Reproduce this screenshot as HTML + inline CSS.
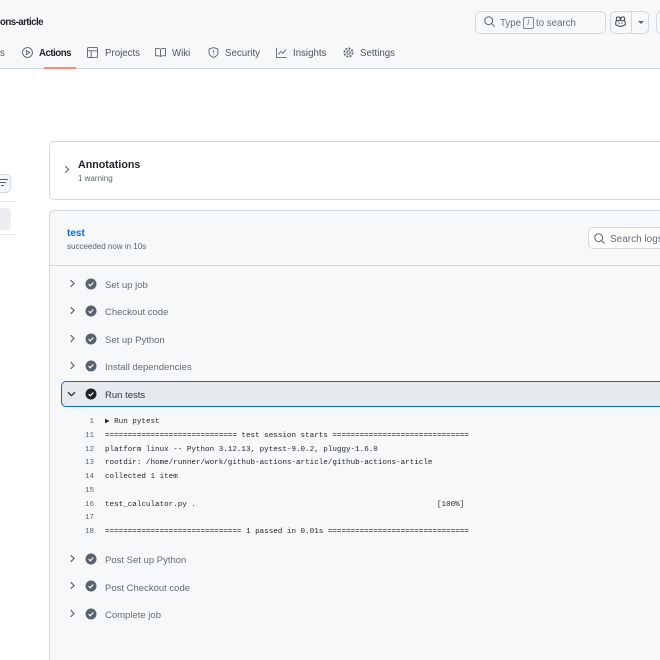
<!DOCTYPE html>
<html><head><meta charset="utf-8">
<style>
html,body{margin:0;padding:0;width:660px;height:660px;overflow:hidden;background:#fff;font-family:"Liberation Sans",sans-serif;color:#59636e}
#w{position:relative;width:660px;height:660px;overflow:hidden}
.a{position:absolute}
.t{position:absolute;white-space:nowrap;line-height:14px}
.tab{font-size:9.700px;color:#4c545d;top:47px}
.step{font-size:9.500px;color:#636c76;left:105px}
.ln{position:absolute;left:70px;width:24px;text-align:right;font:7.580px/12px "Liberation Mono",monospace;color:#59636e}
.lg{position:absolute;left:105px;font:7.580px/12px "Liberation Mono",monospace;color:#1f2328;white-space:pre}
svg{position:absolute;overflow:visible}
</style></head><body><div id="w">
<div class="a" style="left:0;top:0;width:660px;height:68px;background:#f6f8fa;border-bottom:1px solid #d1d9e0"></div>
<div class="t" style="left:0;top:16px;font-size:9.700px;letter-spacing:-.55px;font-weight:bold;color:#1f2328">ons-article</div>
<div class="t tab" style="left:0">s</div>
<svg style="left:22px;top:47px" width="11" height="11" viewBox="0 0 16 16" fill="none" stroke="#59636e" stroke-width="1.300"><circle cx="8" cy="8" r="7.200"/><path d="M6.300 5v6l4.700-3z"/></svg>
<div class="t tab" style="left:39px;font-weight:bold;font-size:9.700px;letter-spacing:-.5px;color:#1f2328">Actions</div>
<div class="a" style="left:44px;top:67px;width:32px;height:2px;background:#fd8c73"></div>
<svg style="left:87px;top:47px" width="11" height="11" viewBox="0 0 16 16" fill="none" stroke="#59636e" stroke-width="1.300"><rect x=".7" y=".7" width="14.600" height="14.600" rx="1.500"/><path d="M.7 5.500h14.600M6 5.500v9.800"/></svg>
<div class="t tab" style="left:105px">Projects</div>
<svg style="left:155px;top:47px" width="11" height="11" viewBox="0 0 16 16" fill="none" stroke="#59636e" stroke-width="1.300"><path d="M8 3.500C6.500 2 3 2 .8 2.300v10.500c2.500-.3 5.500-.3 7.200 1 1.700-1.300 4.700-1.300 7.200-1V2.300C13 2 9.500 2 8 3.500zv10"/></svg>
<div class="t tab" style="left:172px">Wiki</div>
<svg style="left:208px;top:47px" width="11" height="11" viewBox="0 0 16 16" fill="none" stroke="#59636e" stroke-width="1.300"><path d="M8 .8l6.500 2.200v5c0 3.500-3 6-6.500 7.200C4.500 14 1.500 11.500 1.500 8V3z"/><path d="M8 4.500v4M8 10.500v1.200"/></svg>
<div class="t tab" style="left:225px">Security</div>
<svg style="left:276px;top:47px" width="11" height="11" viewBox="0 0 16 16" fill="none" stroke="#59636e" stroke-width="1.300"><path d="M.8 1v14.200H15.500M3.500 11l3.500-4.500 3 2.500 4.500-5.500"/></svg>
<div class="t tab" style="left:293px">Insights</div>
<svg style="left:343px;top:47px" width="11" height="11" viewBox="0 0 16 16" fill="none" stroke="#59636e" stroke-width="1.400"><circle cx="8" cy="8" r="2.500"/><circle cx="8" cy="8" r="6" stroke-width="2.600" stroke-dasharray="2.800 1.900"/></svg>
<div class="t tab" style="left:360px">Settings</div>

<div class="a" style="left:475px;top:11px;width:129px;height:21px;border:1px solid #d1d9e0;border-radius:5px;background:#f6f8fa"></div>
<svg style="left:484px;top:16px" width="11" height="11" viewBox="0 0 16 16" fill="none" stroke="#59636e" stroke-width="1.500"><circle cx="6.800" cy="6.800" r="5.700"/><path d="M11 11l4.500 4.500"/></svg>
<div class="t" style="left:500px;top:17px;font-size:9.700px;color:#636c76">Type</div>
<div class="a" style="left:523px;top:17px;width:9px;height:10px;border:1px solid #818b98;border-radius:2px;font-size:8px;line-height:10px;text-align:center;color:#59636e">/</div>
<div class="t" style="left:536px;top:17px;font-size:9.700px;color:#636c76">to search</div>
<div class="a" style="left:610px;top:11px;width:37px;height:21px;border:1px solid #d1d9e0;border-radius:5px;background:#f6f8fa"></div>
<div class="a" style="left:631px;top:12px;width:1px;height:21px;background:#d1d9e0"></div>
<svg style="left:615px;top:16px" width="11" height="11" viewBox="0 0 16 16" fill="none" stroke="#454c54" stroke-width="1.500"><rect x="2" y="1.500" width="5.500" height="5.500" rx="2.200"/><rect x="8.500" y="1.500" width="5.500" height="5.500" rx="2.200"/><path d="M2.500 6.500C1.500 7.500 1 8.500 1 10v2.500C3 14 5.500 15 8 15s5-1 7-2.500V10c0-1.500-.5-2.500-1.500-3.500"/><path d="M6 9.500v2M10 9.500v2"/></svg>
<div class="a" style="left:638px;top:21px;border:3px solid transparent;border-top-color:#59636e;border-bottom:0"></div>
<div class="a" style="left:656px;top:11px;width:8px;height:21px;border:1px solid #d1d9e0;border-radius:5px;background:#f6f8fa"></div>

<div class="a" style="left:-8px;top:174px;width:17px;height:17px;border:1px solid #d1d9e0;border-radius:5px;background:#f6f8fa"></div>
<svg style="left:0;top:179px" width="8" height="8" fill="none" stroke="#59636e" stroke-width="1"><path d="M-1 .5h9M0 3.500h6M1 6.500h3"/></svg>
<div class="a" style="left:0;top:201px;width:16px;height:1px;background:#e6e9ec"></div>
<div class="a" style="left:-5px;top:208px;width:16px;height:22px;border-radius:4px;background:#eceef1"></div>
<div class="a" style="left:0;top:234px;width:16px;height:1px;background:#e6e9ec"></div>

<div class="a" style="left:49px;top:141px;width:630px;height:57px;border:1px solid #d1d9e0;border-radius:5px;background:#fff"></div>
<svg style="left:64px;top:165px" width="6" height="9" fill="none" stroke="#59636e" stroke-width="1.100"><path d="M1.300 1.200L4.500 4.500 1.300 7.800"/></svg>
<div class="t" style="left:78px;top:158px;font-size:10.700px;font-weight:bold;color:#1f2328">Annotations</div>
<div class="t" style="left:78px;top:172px;font-size:8px;color:#59636e">1 warning</div>

<div class="a" style="left:49px;top:210px;width:630px;height:460px;border:1px solid #d1d9e0;border-radius:5px;background:#f6f8fa"></div>
<div class="a" style="left:50px;top:265px;width:610px;height:1px;background:#d1d9e0"></div>
<div class="t" style="left:67px;top:227px;font-size:10px;font-weight:bold;color:#0969da">test</div>
<div class="t" style="left:67px;top:240px;font-size:8px;color:#59636e">succeeded now in 10s</div>
<div class="a" style="left:588px;top:227px;width:90px;height:20px;border:1px solid #d1d9e0;border-radius:5px;background:#fff"></div>
<svg style="left:594px;top:233px" width="11" height="11" viewBox="0 0 16 16" fill="none" stroke="#59636e" stroke-width="1.500"><circle cx="6.800" cy="6.800" r="5.700"/><path d="M11 11l4.500 4.500"/></svg>
<div class="t" style="left:610px;top:233px;font-size:10px;color:#636c76">Search logs</div>

<div class="a" style="left:61px;top:381px;width:620px;height:24px;border:1px solid #0969da;border-radius:5px;background:#e6eaef;box-sizing:content-box"></div>

<svg style="left:69px;top:279px" width="7" height="9" fill="none" stroke="#59636e" stroke-width="1.200"><path d="M1.700 1.200L5 4.500 1.700 7.800"/></svg>
<svg style="left:85px;top:278px" width="12" height="12" viewBox="0 0 12 12"><circle cx="6" cy="6" r="5.500" fill="#59636e"/><path d="M3.600 6.200l1.700 1.600 3-3.300" fill="none" stroke="#fff" stroke-width="1.100"/></svg>
<div class="t step" style="top:279px">Set up job</div>

<svg style="left:69px;top:306px" width="7" height="9" fill="none" stroke="#59636e" stroke-width="1.200"><path d="M1.700 1.200L5 4.500 1.700 7.800"/></svg>
<svg style="left:85px;top:305px" width="12" height="12" viewBox="0 0 12 12"><circle cx="6" cy="6" r="5.500" fill="#59636e"/><path d="M3.600 6.200l1.700 1.600 3-3.300" fill="none" stroke="#fff" stroke-width="1.100"/></svg>
<div class="t step" style="top:306px">Checkout code</div>

<svg style="left:69px;top:334px" width="7" height="9" fill="none" stroke="#59636e" stroke-width="1.200"><path d="M1.700 1.200L5 4.500 1.700 7.800"/></svg>
<svg style="left:85px;top:333px" width="12" height="12" viewBox="0 0 12 12"><circle cx="6" cy="6" r="5.500" fill="#59636e"/><path d="M3.600 6.200l1.700 1.600 3-3.300" fill="none" stroke="#fff" stroke-width="1.100"/></svg>
<div class="t step" style="top:334px">Set up Python</div>

<svg style="left:69px;top:361px" width="7" height="9" fill="none" stroke="#59636e" stroke-width="1.200"><path d="M1.700 1.200L5 4.500 1.700 7.800"/></svg>
<svg style="left:85px;top:360px" width="12" height="12" viewBox="0 0 12 12"><circle cx="6" cy="6" r="5.500" fill="#59636e"/><path d="M3.600 6.200l1.700 1.600 3-3.300" fill="none" stroke="#fff" stroke-width="1.100"/></svg>
<div class="t step" style="top:361px">Install dependencies</div>

<svg style="left:67px;top:391px" width="10" height="7" fill="none" stroke="#1f2328" stroke-width="1.200"><path d="M1 1.200L4.500 4.700 8 1.200"/></svg>
<svg style="left:85px;top:388px" width="12" height="12" viewBox="0 0 12 12"><circle cx="6" cy="6" r="5.500" fill="#1f2328"/><path d="M3.600 6.200l1.700 1.600 3-3.300" fill="none" stroke="#fff" stroke-width="1.100"/></svg>
<div class="t step" style="top:389px;color:#2f353b">Run tests</div>

<div class="ln" style="top:416px">1</div><div class="lg" style="top:416px">▶ Run pytest</div>
<div class="ln" style="top:430px">11</div><div class="lg" style="top:430px">============================= test session starts ==============================</div>
<div class="ln" style="top:444px">12</div><div class="lg" style="top:444px">platform linux -- Python 3.12.13, pytest-9.0.2, pluggy-1.6.0</div>
<div class="ln" style="top:457px">13</div><div class="lg" style="top:457px">rootdir: /home/runner/work/github-actions-article/github-actions-article</div>
<div class="ln" style="top:471px">14</div><div class="lg" style="top:471px">collected 1 item</div>
<div class="ln" style="top:485px">15</div>
<div class="ln" style="top:499px">16</div><div class="lg" style="top:499px">test_calculator.py .                                                     [100%]</div>
<div class="ln" style="top:512px">17</div>
<div class="ln" style="top:526px">18</div><div class="lg" style="top:526px">============================== 1 passed in 0.01s ===============================</div>

<svg style="left:69px;top:554px" width="7" height="9" fill="none" stroke="#59636e" stroke-width="1.200"><path d="M1.700 1.200L5 4.500 1.700 7.800"/></svg>
<svg style="left:85px;top:553px" width="12" height="12" viewBox="0 0 12 12"><circle cx="6" cy="6" r="5.500" fill="#59636e"/><path d="M3.600 6.200l1.700 1.600 3-3.300" fill="none" stroke="#fff" stroke-width="1.100"/></svg>
<div class="t step" style="top:554px">Post Set up Python</div>

<svg style="left:69px;top:581px" width="7" height="9" fill="none" stroke="#59636e" stroke-width="1.200"><path d="M1.700 1.200L5 4.500 1.700 7.800"/></svg>
<svg style="left:85px;top:580px" width="12" height="12" viewBox="0 0 12 12"><circle cx="6" cy="6" r="5.500" fill="#59636e"/><path d="M3.600 6.200l1.700 1.600 3-3.300" fill="none" stroke="#fff" stroke-width="1.100"/></svg>
<div class="t step" style="top:582px">Post Checkout code</div>

<svg style="left:69px;top:609px" width="7" height="9" fill="none" stroke="#59636e" stroke-width="1.200"><path d="M1.700 1.200L5 4.500 1.700 7.800"/></svg>
<svg style="left:85px;top:608px" width="12" height="12" viewBox="0 0 12 12"><circle cx="6" cy="6" r="5.500" fill="#59636e"/><path d="M3.600 6.200l1.700 1.600 3-3.300" fill="none" stroke="#fff" stroke-width="1.100"/></svg>
<div class="t step" style="top:609px">Complete job</div>
</div></body></html>
